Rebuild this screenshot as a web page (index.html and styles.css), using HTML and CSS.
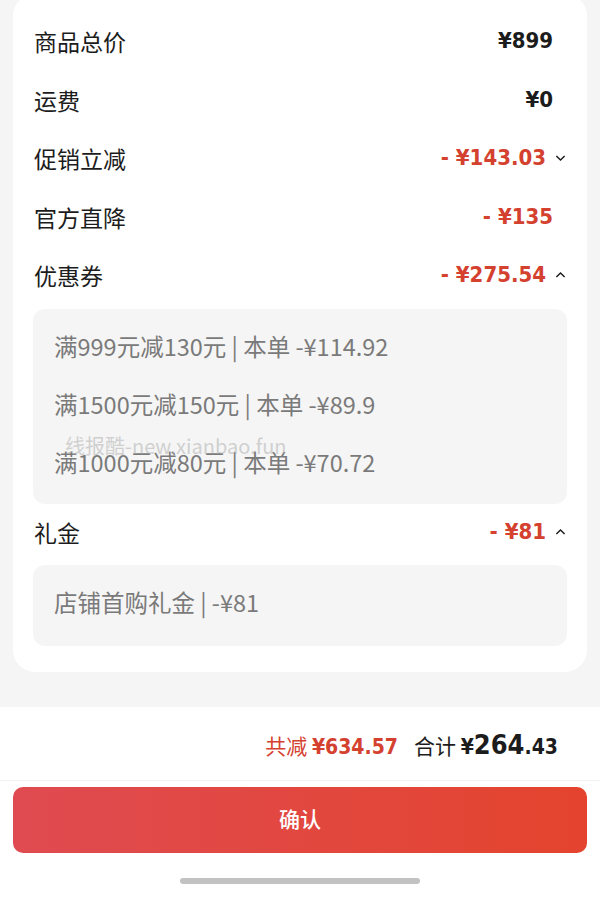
FILE: index.html
```html
<!DOCTYPE html>
<html lang="zh-CN">

<head>
    <meta charset="UTF-8">
    <title>订单优惠明细</title>
    <link rel="stylesheet" href="styles.css">
</head>

<body>
    <section class="card">
        <div class="row">
            <span class="label">商品总价</span>
            <span class="value"><span>¥899</span></span>
        </div>
        <div class="row">
            <span class="label">运费</span>
            <span class="value"><span>¥0</span></span>
        </div>
        <div class="row">
            <span class="label">促销立减</span>
            <span class="value red"><span>- ¥143.03</span><svg class="arrow" viewBox="0 0 12 8"><path d="M1.5 1.8 6 6.2l4.5-4.4" /></svg></span>
        </div>
        <div class="row">
            <span class="label">官方直降</span>
            <span class="value red"><span>- ¥135</span></span>
        </div>
        <div class="row">
            <span class="label">优惠券</span>
            <span class="value red"><span>- ¥275.54</span><svg class="arrow" viewBox="0 0 12 8"><path d="M1.5 6.2 6 1.8l4.5 4.4" /></svg></span>
        </div>
        <div class="detail">
            <p>满999元减130元 | 本单 -¥114.92</p>
            <p>满1500元减150元 | 本单 -¥89.9</p>
            <p>满1000元减80元 | 本单 -¥70.72</p>
            <span class="mark">线报酷-new.xianbao.fun</span>
        </div>
        <div class="row gift">
            <span class="label">礼金</span>
            <span class="value red"><span>- ¥81</span><svg class="arrow" viewBox="0 0 12 8"><path d="M1.5 6.2 6 1.8l4.5 4.4" /></svg></span>
        </div>
        <div class="detail single">
            <p>店铺首购礼金 | -¥81</p>
        </div>
    </section>

    <footer>
        <div class="total">
            <span class="saved">共减 <b>¥634.57</b></span>
            <span class="sum">合计 <b>¥<em>264</em>.43</b></span>
        </div>
        <div class="bar">
            <button class="confirm">确认</button>
            <div class="home"></div>
        </div>
    </footer>
</body>

</html>
```

FILE: styles.css
```css
body {
    margin: 0;
    background-color: #f5f5f5;
    font-family: "Noto Sans CJK SC", "Noto Sans", sans-serif;
    color: #1c1c1c;
}

.card {
    background-color: white;
    margin: -6px 13px 0 13px;
    padding: 20px 20px 26px 20px;
    border-radius: 22px;
}

.row {
    display: flex;
    justify-content: space-between;
    align-items: center;
    height: 58.5px;
}

.label {
    font-size: 23px;
    line-height: 30px;
    padding-left: 1px;
    margin-top: -4px;
}

.value {
    display: flex;
    align-items: center;
    font-family: "DejaVu Sans Condensed", Roboto, sans-serif;
    font-size: 22px;
    font-weight: bold;
    line-height: 30px;
    padding-right: 14px;
    margin-top: -4px;
}

.red {
    color: #d4412f;
}

.arrow {
    width: 11px;
    height: 8px;
    margin-left: 9px;
    margin-right: -13px;
    fill: none;
    stroke: #1c1c1c;
    stroke-width: 1.6;
}

.detail {
    position: relative;
    background-color: #f5f5f5;
    border-radius: 12px;
    padding: 10px 21px 11px 21px;
    margin-top: 2px;
}

.detail p {
    margin: 0;
    height: 58px;
    line-height: 54px;
    font-size: 23.5px;
    color: #7a7a7a;
}

.single {
    padding-bottom: 13px;
}

.gift {
    margin-top: 1px;
}

.mark {
    position: absolute;
    left: 32px;
    top: 122px;
    font-size: 20px;
    color: rgba(170, 170, 170, 0.5);
}

footer {
    background-color: white;
    margin-top: 35px;
    height: 191px;
}

.total {
    display: flex;
    justify-content: flex-end;
    align-items: baseline;
    gap: 16px;
    height: 73px;
    line-height: 76px;
    padding-right: 42px;
    border-bottom: 1px solid #f2f2f2;
    font-size: 21px;
}

.saved {
    color: #d4412f;
}

.total b {
    font-family: "DejaVu Sans Condensed", Roboto, sans-serif;
    font-weight: bold;
}

.sum em {
    font-style: normal;
    font-size: 27px;
}

.bar {
    padding: 6px 13px 0 13px;
}

.confirm {
    display: block;
    width: 100%;
    height: 66px;
    padding-bottom: 5px;
    border: none;
    border-radius: 10px;
    background: linear-gradient(to right, #e04b51, #e4442e);
    color: white;
    font-family: "Noto Sans CJK SC", sans-serif;
    font-size: 21px;
    font-weight: 500;
}

.home {
    width: 240px;
    height: 6px;
    margin: 25px auto 0 auto;
    border-radius: 3px;
    background-color: #c2c2c2;
}
```
